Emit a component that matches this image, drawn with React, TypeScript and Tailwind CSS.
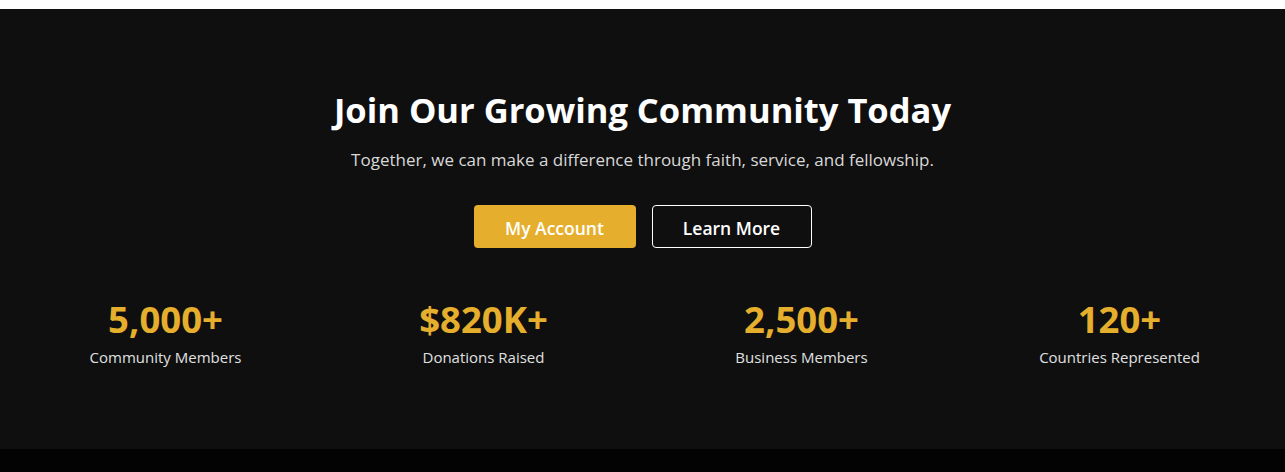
import React from 'react';

const stats = [
  { v: '5,000+', l: 'Community Members' },
  { v: '$820K+', l: 'Donations Raised' },
  { v: '2,500+', l: 'Business Members' },
  { v: '120+', l: 'Countries Represented' },
];

const App: React.FC = () => {
  return (
    <div className="bg-white pt-[9px] font-['Open_Sans',sans-serif]">
      <section className="bg-[#0f0f0f] pt-[81px] pb-[81px] text-white text-center">
        <div className="max-w-4xl mx-auto px-4">
          <h1 className="text-[34.5px] leading-[40px] font-bold">Join Our Growing Community Today</h1>
          <p className="mt-[17px] text-[17px] leading-[26px] text-[#d8d8d8]">
            Together, we can make a difference through faith, service, and fellowship.
          </p>
          <div className="mt-[32px] flex justify-center gap-4">
            <button className="w-[162px] h-[43px] pt-[4px] rounded-[4px] bg-[#e5af2d] text-white text-[17.5px] font-semibold">
              My Account
            </button>
            <button className="w-[160px] h-[43px] pt-[4px] rounded-[4px] border border-white text-white text-[17.5px] font-semibold">
              Learn More
            </button>
          </div>
        </div>
        <div className="max-w-7xl mx-auto px-4 mt-[51px] grid grid-cols-4 gap-6">
          {stats.map((s, i) => (
            <div key={i}>
              <div className="text-[36.5px] leading-[40px] font-bold text-[#e5af2d]">{s.v}</div>
              <div className="mt-[7px] text-[15px] leading-[22px] text-[#e0e0e0]">{s.l}</div>
            </div>
          ))}
        </div>
      </section>
      <div className="bg-[#030303] h-[40px]" />
    </div>
  );
};

export default App;
